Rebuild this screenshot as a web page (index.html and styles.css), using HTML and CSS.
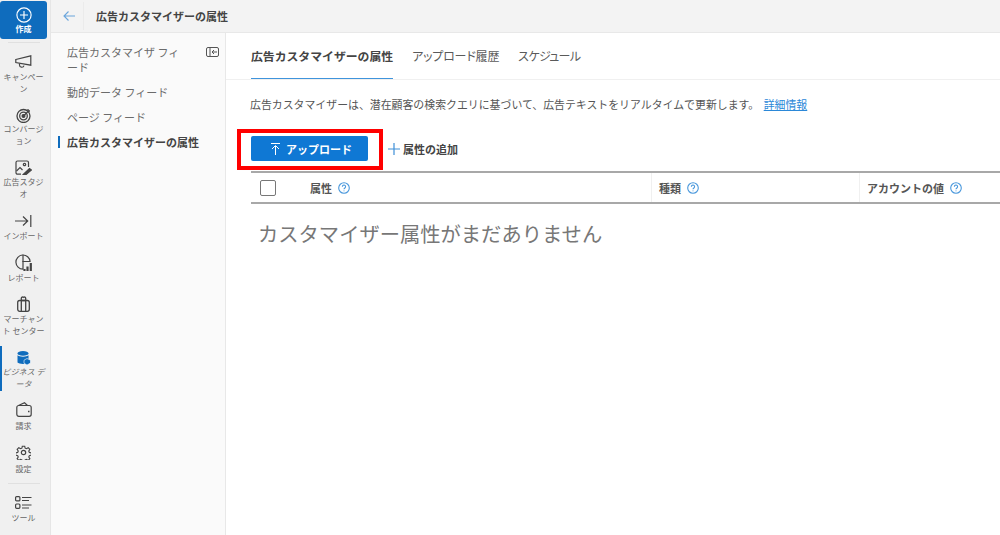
FILE: index.html
```html
<!DOCTYPE html>
<html lang="ja">
<head>
<meta charset="utf-8">
<title>広告カスタマイザーの属性</title>
<link rel="stylesheet" href="styles.css">
</head>
<body>
<div class="app">
  <nav class="rail">
    <a class="create">
      <svg width="16" height="16" viewBox="0 0 18 18" fill="none" stroke="#fff" stroke-width="1.3"><circle cx="9" cy="9" r="8"/><path d="M9 4.500v9M4.500 9h9"/></svg>
      <span>作成</span>
    </a>
    <hr class="rail-rule rule-top">
    <a class="item i-camp">
      <svg width="17" height="13" viewBox="0 0 17 13" fill="none" stroke="#444" stroke-width="1.2"><path d="M.8 4.500 15.800.8v9.400L.8 7.500z"/><path d="M4.500 8.500v1.500a2.300 2.300 0 0 0 4.500.6"/></svg>
      <span>キャンペーン</span>
    </a>
    <a class="item i-conv">
      <svg width="16" height="15" viewBox="0 0 16 15" fill="none" stroke="#444" stroke-width="1.300"><circle cx="7.500" cy="8" r="6.500"/><circle cx="7.500" cy="8" r="3.800"/><circle cx="7.500" cy="8" r="1.400" fill="#444"/><path d="m7.500 8 5.500-5.500M12 1v2h2"/></svg>
      <span>コンバージョン</span>
    </a>
    <a class="item i-studio">
      <svg width="17" height="15" viewBox="0 0 17 15" fill="none" stroke="#444" stroke-width="1.200"><path d="M6 14.200H2.500A1.500 1.500 0 0 1 1 12.700V2.500A1.500 1.500 0 0 1 2.500 1h9.500a1.500 1.500 0 0 1 1.500 1.500V7"/><path d="m1.500 11 3.500-3.500 2.500 2.500"/><circle cx="9.500" cy="4.500" r="1.200"/><path d="M8 14.800 14.500 8.500l2 1.500-6 5z" fill="#444"/></svg>
      <span>広告スタジオ</span>
    </a>
    <a class="item i-import">
      <svg width="17" height="12" viewBox="0 0 17 12" fill="none" stroke="#444" stroke-width="1.200"><path d="M0 6h12.500M8 1.500l4.700 4.500L8 10.500M15.800 0v12"/></svg>
      <span>インポート</span>
    </a>
    <a class="item i-report">
      <svg width="17" height="17" viewBox="0 0 17 17" fill="none" stroke="#444" stroke-width="1.200"><path d="M8 15.200A7.100 7.100 0 1 1 15.100 7.500H8z"/><path d="M8 .8v6.700h7"/><path d="M9.500 17v-2M12.500 17v-4.500M15.800 17V9" stroke-width="2.200"/></svg>
      <span>レポート</span>
    </a>
    <a class="item i-merchant">
      <svg width="13" height="16" viewBox="0 0 13 16" fill="none" stroke="#444" stroke-width="1.300"><rect x=".7" y="4.500" width="11.600" height="10.800" rx="2"/><path d="M4.300 15.300V2.200a1.300 1.300 0 0 1 2.200-.8 1.300 1.300 0 0 1 2.200.8v13.100M4.300 4.500h4.400"/></svg>
      <span>マーチャント センター</span>
    </a>
    <a class="item current i-data">
      <svg width="14" height="14" viewBox="0 0 14 14" fill="#0f6cbd"><ellipse cx="6" cy="2.400" rx="5.500" ry="2.300"/><path d="M.5 4.300C2 6.100 10 6.100 11.500 4.300v7.300c-1.500 1.900-9.500 1.900-11 0z"/><path d="m10 7.500 3.500 1.700v2.900L10 14l-3-1.800V9.200z" stroke="#fff" stroke-width=".6"/></svg>
      <span>ビジネス データ</span>
    </a>
    <a class="item i-bill">
      <svg width="16" height="15" viewBox="0 0 16 15" fill="none" stroke="#444" stroke-width="1.200"><rect x=".8" y="3.500" width="14.400" height="10.800" rx="2"/><path d="M2.500 3.500 8.500.8l3 2.700"/><path d="M12 9.500h1.500" stroke-width="1.500"/></svg>
      <span>請求</span>
    </a>
    <a class="item i-set">
      <svg width="15" height="15" viewBox="0 0 24 24" fill="none" stroke="#444" stroke-width="1.900"><circle cx="12" cy="12" r="3.500"/><path d="M10 1.500h4l.7 3.300 2.200.9 2.900-1.800 2.800 2.800-1.800 2.900.9 2.200 3.300.7v4l-3.300.7-.9 2.200 1.800 2.900-2.800 2.800-2.900-1.800-2.200.9-.7 3.300h-4l-.7-3.300-2.200-.9-2.900 1.800-2.800-2.800 1.800-2.900-.9-2.200-3.300-.7v-4l3.300-.7.900-2.200-1.800-2.900 2.800-2.800 2.900 1.800 2.200-.9z" transform="translate(.5 .5) scale(.96)"/></svg>
      <span>設定</span>
    </a>
    <hr class="rail-rule rule-bottom">
    <a class="item i-tool">
      <svg width="17" height="13" viewBox="0 0 17 13" fill="none" stroke="#444" stroke-width="1.200"><rect x=".6" y=".6" width="4.300" height="4.300" rx="1"/><rect x=".6" y="8" width="4.300" height="4.300" rx="1"/><path d="M7 1.500h9.500M7 4.500h7M7 9h9.500M7 12h7"/></svg>
      <span>ツール</span>
    </a>
  </nav>
  <div class="main">
    <header class="topbar">
      <svg class="back" width="12" height="10" viewBox="0 0 12 10" fill="none" stroke="#6aa5dc" stroke-width="1.100"><path d="M12 5H1M5.500.5 1 5l4.500 4.500"/></svg>
      <h1>広告カスタマイザーの属性</h1>
    </header>
    <div class="body">
      <aside class="side">
        <svg class="collapse" width="13" height="10" viewBox="0 0 13 10" fill="none" stroke="#555"><rect x=".5" y=".5" width="12" height="9" rx="1.500"/><path d="M4 .5v9M11 5H6M8 3 6 5l2 2"/></svg>
        <ul>
          <li>広告カスタマイザ フィード</li>
          <li>動的データ フィード</li>
          <li>ページ フィード</li>
          <li class="on">広告カスタマイザーの属性</li>
        </ul>
      </aside>
      <main class="content">
        <div class="tabs">
          <a class="tab active">広告カスタマイザーの属性</a>
          <a class="tab tab-history">アップロード履歴</a>
          <a class="tab tab-schedule">スケジュール</a>
        </div>
        <p class="desc">広告カスタマイザーは、潜在顧客の検索クエリに基づいて、広告テキストをリアルタイムで更新します。 <a>詳細情報</a></p>
        <div class="actions">
          <button class="upload">
            <svg width="9" height="12" viewBox="0 0 9 12" fill="none" stroke="#fff"><path d="M0 .5h9M4.500 12V3M1 6l3.500-3.500L8 6"/></svg>
            <span>アップロード</span>
          </button>
          <a class="add">
            <svg width="12" height="12" viewBox="0 0 12 12" fill="none" stroke="#3f8fd8" stroke-width="1.200"><path d="M6 0v12M0 6h12"/></svg>
            <span>属性の追加</span>
          </a>
        </div>
        <div class="thead">
          <div class="cell c-check"><i class="box"></i></div>
          <div class="cell c-attr">属性<svg class="help" width="12" height="12" viewBox="0 0 12 12" fill="none" stroke="#4a98dc" stroke-width="1.100"><circle cx="6" cy="6" r="5.300"/><path d="M4.400 4.700a1.600 1.600 0 1 1 2.500 1.300c-.6.400-.9.700-.9 1.300M6 8.400v.9"/></svg></div>
          <div class="cell c-type">種類<svg class="help" width="12" height="12" viewBox="0 0 12 12" fill="none" stroke="#4a98dc" stroke-width="1.100"><circle cx="6" cy="6" r="5.300"/><path d="M4.400 4.700a1.600 1.600 0 1 1 2.500 1.300c-.6.400-.9.700-.9 1.300M6 8.400v.9"/></svg></div>
          <div class="cell c-acct">アカウントの値<svg class="help" width="12" height="12" viewBox="0 0 12 12" fill="none" stroke="#4a98dc" stroke-width="1.100"><circle cx="6" cy="6" r="5.300"/><path d="M4.400 4.700a1.600 1.600 0 1 1 2.500 1.300c-.6.400-.9.700-.9 1.300M6 8.400v.9"/></svg></div>
        </div>
        <p class="empty">カスタマイザー属性がまだありません</p>
      </main>
    </div>
  </div>
</div>
</body>
</html>
```
FILE: styles.css
```css
* { box-sizing: border-box; }
html, body { margin: 0; height: 100%; overflow: hidden; }
body {
  font-family: "Noto Sans CJK JP", "Noto Sans", sans-serif;
  color: #444;
  background: #fff;
}
.app { display: flex; width: 1000px; height: 535px; }

.rail {
  width: 51px;
  flex: none;
  background: #f0f0f0;
  border-right: 1px solid #e6e6e6;
  display: flex;
  flex-direction: column;
  align-items: center;
}
.create {
  align-self: flex-start;
  width: 47px;
  height: 38px;
  margin-top: 1px;
  padding-top: 6px;
  background: #0f6cbd;
  border-radius: 3px;
  color: #fff;
  display: flex;
  flex-direction: column;
  align-items: center;
  font-size: 8px;
  font-weight: 700;
  line-height: 12px;
}
.rail-rule { width: 32px; height: 1px; border: 0; background: #e0e0e0; margin: 3px 0 0 -3px; flex: none; }
.item {
  width: 100%;
  display: flex;
  flex-direction: column;
  align-items: center;
  text-align: center;
  font-size: 8px;
  line-height: 11.500px;
  color: #666;
  padding: 0 5px 0 2px;
}
.item svg { flex: none; }
.i-camp { margin-top: 12px; }
.i-camp svg { margin-bottom: 3px; }
.i-conv { margin-top: 14px; }
.i-conv svg { margin-bottom: 0; }
.i-studio { margin-top: 14px; }
.i-studio svg { margin-bottom: 1px; }
.i-import { margin-top: 16px; }
.i-import svg { margin-bottom: 3px; }
.i-report { margin-top: 12px; }
.i-report svg { margin-bottom: 1px; }
.i-merchant { margin-top: 13px; }
.i-merchant svg { margin-bottom: 1px; }
.i-data { margin-top: 15px; }
.i-data svg { margin-bottom: 1px; }
.i-bill { margin-top: 13px; }
.i-bill svg { margin-bottom: 3px; }
.i-set { margin-top: 13px; }
.i-set svg { margin-bottom: 3px; }
.rule-bottom { margin-top: 9px; }
.i-tool { margin-top: 12px; }
.i-tool svg { margin-bottom: 3px; }
.current { position: relative; font-style: italic; }
.current::before {
  content: "";
  position: absolute;
  left: 0;
  top: -5px;
  bottom: -2px;
  width: 1.500px;
  background: #0f6cbd;
}

.main { flex: 1; min-width: 0; display: flex; flex-direction: column; }
.topbar {
  height: 33px;
  flex: none;
  background: #f3f3f3;
  border-bottom: 1px solid #e8e8e8;
  display: flex;
  align-items: center;
  padding-left: 12px;
}
.topbar h1 {
  margin: 0 0 0 8px;
  padding-left: 12px;
  font-size: 11px;
  font-weight: 700;
  color: #444;
  border-left: 1px solid #ebebeb;
  line-height: 28px;
}
.body { flex: 1; display: flex; min-height: 0; }
.side {
  width: 175px;
  flex: none;
  background: #fafafa;
  border-right: 1px solid #e8e8e8;
  position: relative;
  padding-top: 12px;
}
.collapse { position: absolute; left: 155px; top: 14px; }
.side ul { list-style: none; margin: 0; padding: 0 40px 0 16px; }
.side li {
  position: relative;
  font-size: 11px;
  line-height: 15px;
  color: #6b6b6b;
  margin-bottom: 10px;
}
.side li.on { color: #444; font-weight: 700; white-space: nowrap; }
.side li.on::before {
  content: "";
  position: absolute;
  left: -9px;
  top: 1px;
  width: 2px;
  height: 12px;
  background: #0f6cbd;
}

.content { flex: 1; min-width: 0; padding-left: 25px; overflow: hidden; }
.tabs {
  display: flex;
  align-items: flex-start;
  gap: 19px;
  height: 47px;
  margin-left: -25px;
  padding-left: 25px;
  border-bottom: 1px solid #f0f0f0;
}
.tab {
  font-size: 12px;
  font-feature-settings: "palt";
  line-height: 46px;
  height: 46px;
  color: #5a5a5a;
}
.tab-history { letter-spacing: -.2px; }
.tab-schedule { letter-spacing: -.65px; }
.tab.active {
  font-size: 11.850px;
  font-feature-settings: normal;
  color: #444;
  font-weight: 700;
  height: 45.500px;
  line-height: 46px;
  border-bottom: 1.500px solid #3f94dc;
}
.desc { margin: 16px 0 0 -1px; font-size: 10.900px; line-height: 16px; color: #555; white-space: nowrap; }
.desc a { color: #2b88d8; text-decoration: underline; margin-left: 2px; }
.actions {
  display: flex;
  align-items: center;
  margin-top: 19px;
  height: 35px;
  gap: 20px;
}
.upload {
  width: 117px;
  height: 25px;
  border: 0;
  padding: 0 0 0 4px;
  border-radius: 2px;
  background: #0f78d4;
  color: #fff;
  font: 700 11px "Noto Sans CJK JP", sans-serif;
  display: flex;
  align-items: center;
  justify-content: center;
  gap: 6px;
  position: relative;
}
.upload::after {
  content: "";
  position: absolute;
  inset: -7px -15px -9px -14px;
  border: 4px solid #f00;
  pointer-events: none;
}
.add { display: flex; align-items: center; gap: 3px; font-size: 11px; font-weight: 700; color: #444; }
.thead {
  display: flex;
  height: 33px;
  margin-top: 5px;
  border-top: 2px solid #a8a8a8;
  border-bottom: 2px solid #a8a8a8;
}
.cell { display: flex; align-items: center; font-size: 11px; font-weight: 700; color: #555; gap: 6px; border-right: 1px solid #f0f0f0; padding-left: 7px; }
.c-check { width: 52px; padding-left: 9px; border: 0; }
.c-attr { width: 349px; }
.c-type { width: 208px; }
.c-acct { flex: 1; border-right: 0; }
.box { display: block; width: 16px; height: 16px; border: 1.500px solid #777; border-radius: 2px; background: #fff; }
.help { flex: none; }
.empty { margin: 15px 0 0 7px; font-size: 20.300px; line-height: 28px; color: #777; white-space: nowrap; }
```
